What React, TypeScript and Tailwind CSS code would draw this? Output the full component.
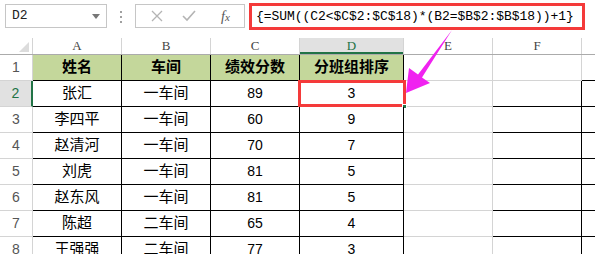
import React from "react";

type Row = { n: number; cells: string[] };

const header = ["姓名", "车间", "绩效分数", "分班组排序"];

const rows: Row[] = [
  { n: 2, cells: ["张汇", "一车间", "89", "3"] },
  { n: 3, cells: ["李四平", "一车间", "60", "9"] },
  { n: 4, cells: ["赵清河", "一车间", "70", "7"] },
  { n: 5, cells: ["刘虎", "一车间", "81", "5"] },
  { n: 6, cells: ["赵东风", "一车间", "81", "5"] },
  { n: 7, cells: ["陈超", "二车间", "65", "4"] },
  { n: 8, cells: ["王强强", "二车间", "77", "3"] },
];

// widths of A..D, then E, F, G
const tableCols = ["w-[89px]", "w-[89px]", "w-[89px]", "w-[104px]"];

const font = { fontFamily: '"Liberation Sans", "Noto Sans CJK SC", sans-serif' };

function FormulaBar() {
  return (
    <div className="flex h-[38px] items-start pt-[3px]">
      {/* name box */}
      <div className="ml-[5px] mt-[1px] flex h-[24px] w-[102px] items-center justify-between border border-[#c6c6c6] pl-[6px] pr-[6px]">
        <span className="text-[13px] text-[#222]" style={{ fontFamily: '"Liberation Mono", monospace' }}>
          D2
        </span>
        <svg width="8" height="5" viewBox="0 0 8 5">
          <path d="M0 0 H8 L4 5 Z" fill="#777" />
        </svg>
      </div>
      <div className="ml-[13px] mt-[8px] flex flex-col gap-[3px]">
        <span className="h-[2px] w-[2px] bg-[#a0a0a0]" />
        <span className="h-[2px] w-[2px] bg-[#a0a0a0]" />
        <span className="h-[2px] w-[2px] bg-[#a0a0a0]" />
      </div>
      {/* cancel / enter / insert function */}
      <div className="ml-[13px] mt-[1px] flex h-[24px] w-[110px] items-center border border-[#c6c6c6]">
        <svg width="12" height="12" viewBox="0 0 12 12" className="ml-[15px]">
          <path d="M1 1 L11 11 M11 1 L1 11" stroke="#b4b4b4" strokeWidth="1.3" />
        </svg>
        <svg width="14" height="12" viewBox="0 0 14 12" className="ml-[19px]">
          <path d="M1 6 L5 10 L13 1" stroke="#b4b4b4" strokeWidth="1.6" fill="none" />
        </svg>
        <span
          className="ml-[25px] text-[14px] italic text-[#555]"
          style={{ fontFamily: '"Liberation Serif", serif' }}
        >
          f<span className="text-[11px]">x</span>
        </span>
      </div>
      <div className="ml-[4px] flex h-[27px] w-[336px] items-center border-[3px] border-[#f43a3a] pl-[4px]">
        <span className="text-[13px] tracking-[-0.05px] text-black" style={{ fontFamily: '"Liberation Mono", monospace' }}>
          {"{=SUM((C2<$C$2:$C$18)*(B2=$B$2:$B$18))+1}"}
        </span>
      </div>
    </div>
  );
}

function ColumnHeaders() {
  const letters = ["A", "B", "C", "D", "E", "F"];
  const widths = [...tableCols, "w-[89px]", "w-[89px]"];
  return (
    <div className="flex h-[17px] border-b border-[#ababab]">
      <div className="relative w-[33px] shrink-0 border-r border-[#d4d4d4]">
        <svg width="10" height="10" viewBox="0 0 10 10" className="absolute right-[3px] bottom-[2px]">
          <path d="M10 0 V10 H0 Z" fill="#dcdcdc" />
        </svg>
      </div>
      {letters.map((l, i) => {
        const active = l === "D";
        return (
          <div
            key={l}
            className={`${widths[i]} flex shrink-0 items-center justify-center border-r ${
              active ? "border-[#d4d4d4] bg-[#e1e1e1] shadow-[inset_0_-2px_0_#217346]" : "border-[#d4d4d4]"
            }`}
          >
            <span
              className={`text-[13px] ${active ? "text-[#217346]" : "text-[#444]"}`}
              style={{ fontFamily: '"Liberation Serif", serif' }}
            >
              {l}
            </span>
          </div>
        );
      })}
      <div className="flex-1" />
    </div>
  );
}

function RowNumber({ n, active }: { n: number; active?: boolean }) {
  return (
    <div
      className={`flex h-full w-[33px] shrink-0 items-end justify-center border-b border-r pb-[2px] ${
        active
          ? "border-b-[#d4d4d4] border-r-[#217346] border-r-2 bg-[#e1e1e1] text-[#217346]"
          : "border-[#d4d4d4] text-[#555]"
      }`}
    >
      <span className="text-[14px]" style={{ fontFamily: '"Liberation Sans", sans-serif' }}>
        {n}
      </span>
    </div>
  );
}

export default function App() {
  return (
    <div className="relative h-[254px] w-[595px] overflow-hidden bg-white" style={font}>
      <FormulaBar />
      <ColumnHeaders />

      {/* header row 1 */}
      <div className="flex h-[26px]">
        <RowNumber n={1} />
        {header.map((h, i) => (
          <div
            key={h}
            className={`${tableCols[i]} flex shrink-0 items-center justify-center border-b border-r border-black bg-[#c4d79b]`}
          >
            <span className="text-[15px] font-bold text-black">{h}</span>
          </div>
        ))}
        <div className="w-[89px] shrink-0 border-b border-r border-[#d4d4d4]" />
        <div className="w-[89px] shrink-0 border-b border-r border-[#d4d4d4]" />
        <div className="flex-1 border-b border-black" />
      </div>

      {rows.map((r) => (
        <div key={r.n} className="flex h-[26px]">
          <RowNumber n={r.n} active={r.n === 2} />
          {r.cells.map((c, i) => {
            const isDigit = i >= 2;
            const selected = r.n === 2 && i === 3;
            return (
              <div
                key={i}
                className={`${tableCols[i]} relative flex shrink-0 items-center justify-center border-b border-r border-black`}
              >
                <span className={isDigit ? "text-[14px] text-black" : "text-[15px] text-black"}>{c}</span>
                {selected && (
                  <>
                    <div className="absolute left-[-2px] top-[-1px] h-[27px] w-[108px] border-[3px] border-[#f43a3a]" />
                    <div className="absolute bottom-[-3px] right-[-4px] h-[5px] w-[5px] border border-white bg-[#217346]" />
                  </>
                )}
              </div>
            );
          })}
          <div className="w-[89px] shrink-0 border-b border-r border-[#d4d4d4]" />
          <div className="w-[89px] shrink-0 border-b border-r border-black" />
          <div className="flex-1 border-b border-black" />
        </div>
      ))}

      {/* callout arrow pointing at D2 */}
      <svg className="pointer-events-none absolute left-0 top-0" width="595" height="254" viewBox="0 0 595 254">
        <polygon
          points="406,93 409,68 418,74.5 452,30 422,77.5 430,83"
          fill="#f022f0"
        />
      </svg>
    </div>
  );
}
